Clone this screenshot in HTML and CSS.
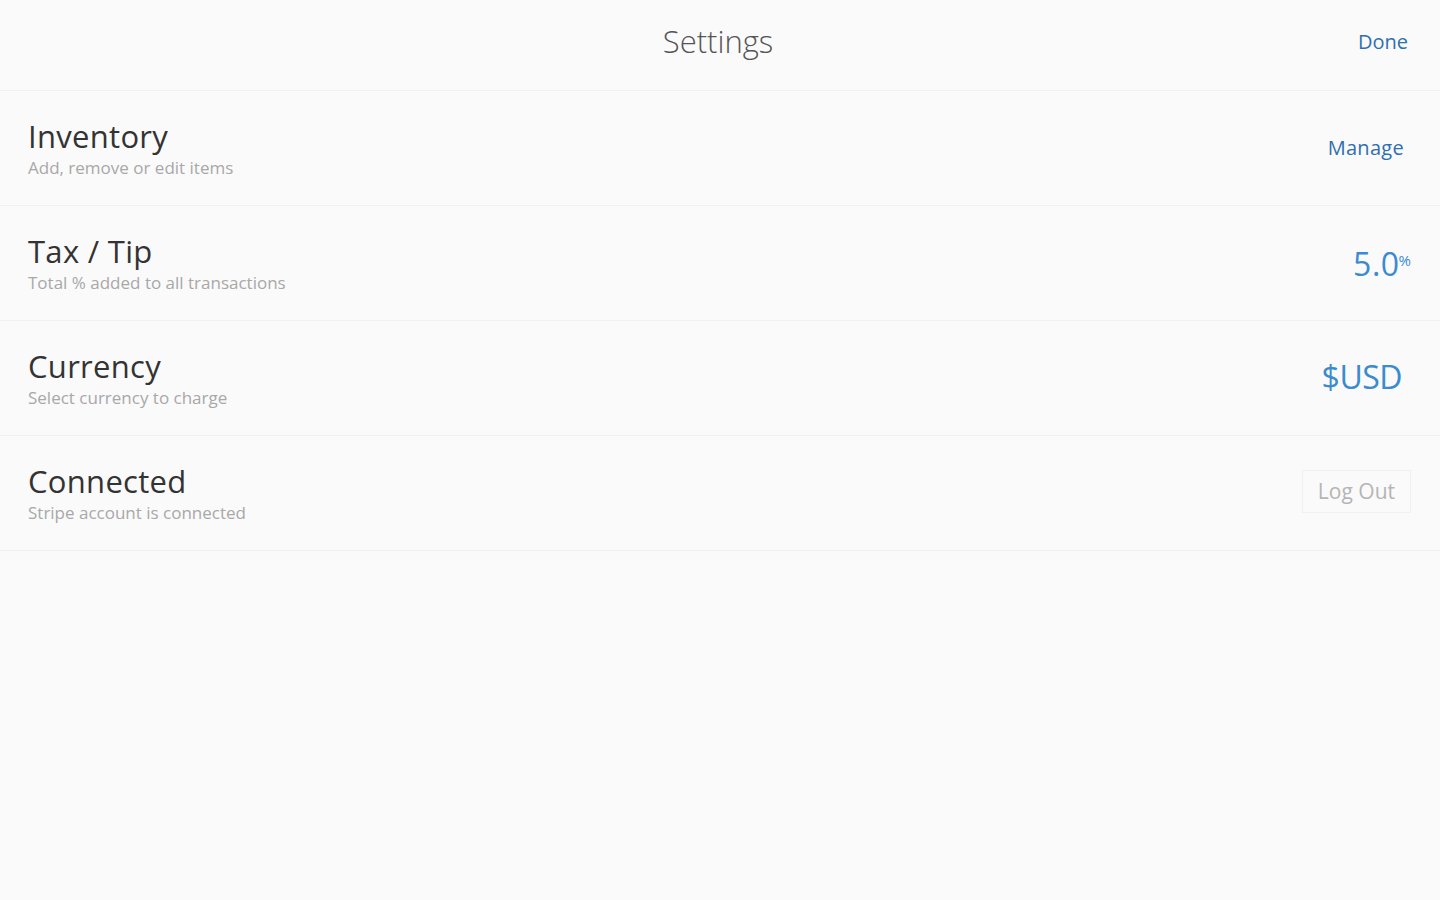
FILE: index.html
```html
<!DOCTYPE html>
<html lang="en">
<head>
    <meta charset="UTF-8">
    <meta name="viewport" content="width=device-width, initial-scale=1.0">
    <title>Settings</title>
    <link rel="stylesheet" href="styles.css">
</head>
<body>
    <header class="top-bar">
        <div class="top-spacer"></div>
        <h1 class="top-title">Settings</h1>
        <a class="top-done" href="#">Done</a>
    </header>

    <ul class="settings-list">
        <li class="setting-row">
            <div class="setting-text">
                <div class="setting-name">Inventory</div>
                <div class="setting-desc">Add, remove or edit items</div>
            </div>
            <a class="setting-link" href="#">Manage</a>
        </li>
        <li class="setting-row">
            <div class="setting-text">
                <div class="setting-name">Tax / Tip</div>
                <div class="setting-desc">Total % added to all transactions</div>
            </div>
            <div class="setting-value">5.0<sup class="pct">%</sup></div>
        </li>
        <li class="setting-row">
            <div class="setting-text">
                <div class="setting-name">Currency</div>
                <div class="setting-desc">Select currency to charge</div>
            </div>
            <div class="setting-value currency">$USD</div>
        </li>
        <li class="setting-row">
            <div class="setting-text">
                <div class="setting-name">Connected</div>
                <div class="setting-desc">Stripe account is connected</div>
            </div>
            <button class="logout-btn">Log Out</button>
        </li>
    </ul>
</body>
</html>
```

FILE: styles.css
```css
body {
    margin: 0;
    background: #fafafa;
    font-family: "Open Sans", "Noto Sans", Arial, sans-serif;
    color: #333;
}
.top-bar {
    height: 90px;
    display: flex;
    align-items: center;
    justify-content: space-between;
    padding: 0 32px 0 28px;
    border-bottom: 1px solid #f0f0f0;
}
.top-spacer {
    width: 60px;
}
.top-title {
    margin: -8px 0 0 0;
    font-size: 31px;
    font-weight: 300;
    color: #555;
}
.top-title,
.top-done {
    line-height: 40px;
}
.top-done {
    width: 60px;
    margin-top: -6px;
    text-align: right;
    font-size: 20px;
    color: #2f6fb0;
    text-decoration: none;
}
.settings-list {
    list-style: none;
    margin: 0;
    padding: 0;
}
.setting-row {
    height: 114px;
    display: flex;
    align-items: center;
    justify-content: space-between;
    padding: 0 30px 0 28px;
    border-bottom: 1px solid #f0f0f0;
}
.setting-text {
    display: flex;
    flex-direction: column;
    gap: 4px;
}
.setting-name {
    font-size: 31px;
    line-height: 36px;
    color: #333;
    letter-spacing: 0.3px;
}
.setting-desc {
    font-size: 17px;
    line-height: 20px;
    color: #a8a8a8;
}
.setting-link {
    font-size: 20px;
    color: #2f6fb0;
    text-decoration: none;
    margin-right: 6px;
    margin-top: -2px;
    letter-spacing: 0.3px;
}
.setting-value {
    font-size: 32px;
    color: #3a8bd0;
    letter-spacing: 0.5px;
}
.setting-value.currency {
    margin-right: 8px;
    margin-top: -4px;
    letter-spacing: -0.5px;
}
.pct {
    font-size: 15px;
    vertical-align: 10px;
    margin-left: -1px;
    letter-spacing: -1px;
}
.logout-btn {
    font-family: inherit;
    font-size: 21px;
    color: #b5b5b5;
    background: #fafafa;
    border: 1px solid #f0f0f0;
    padding: 6px 15px 7px;
    margin-right: -1px;
    margin-top: -4px;
}
```
